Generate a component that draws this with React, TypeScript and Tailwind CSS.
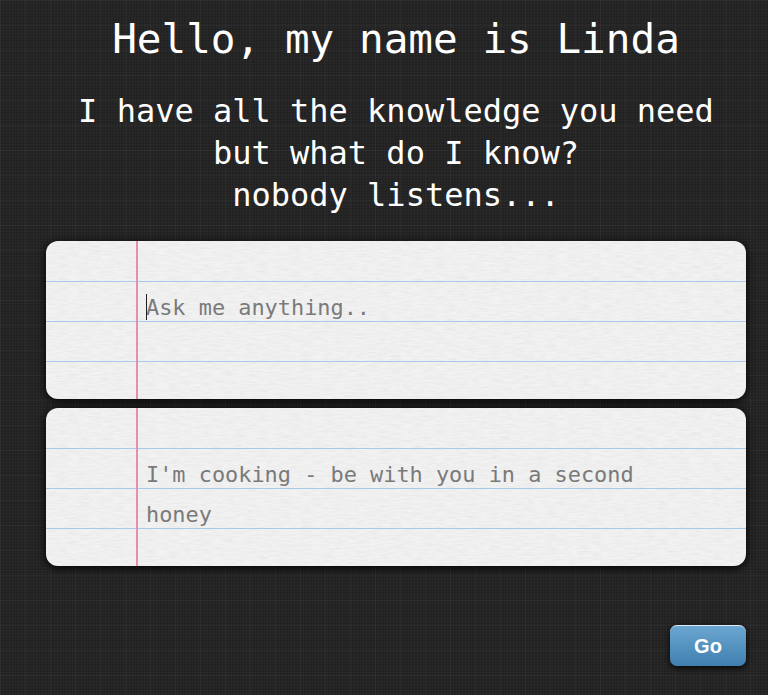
import React from "react";

function PaperCard({ id, children }: { id: string; children: React.ReactNode }) {
  return (
    <div className="relative h-[158px] w-[700px] overflow-hidden rounded-[12px] bg-[#f2f2f2] shadow-[0_2px_10px_rgba(0,0,0,1)]">
      <svg className="absolute inset-0 h-full w-full" aria-hidden="true">
        <filter id={id} x="0" y="0" width="100%" height="100%">
          <feTurbulence type="fractalNoise" baseFrequency="0.09 0.6" numOctaves="3" seed="4" />
          <feColorMatrix type="matrix" values="0 0 0 0 0.6  0 0 0 0 0.6  0 0 0 0 0.6  0.45 0 0 0 -0.15" />
        </filter>
        <rect width="100%" height="100%" filter={`url(#${id})`} />
      </svg>
      <div className="absolute inset-x-0 top-[40px] h-px bg-[#a9c9ec]" />
      <div className="absolute inset-x-0 top-[80px] h-px bg-[#a9c9ec]" />
      <div className="absolute inset-x-0 top-[120px] h-px bg-[#a9c9ec]" />
      <div className="absolute inset-y-0 left-[90px] w-[2px] bg-[#e58fa8]" />
      <div className="relative h-full pl-[100px] pr-[90px] pt-[47px] font-['DejaVu_Sans_Mono',monospace] text-[21.9px] leading-[40px] text-[#7a7a7a]">
        {children}
      </div>
    </div>
  );
}

export default function App() {
  return (
    <div className="min-h-[695px] overflow-hidden bg-[#222222] bg-[linear-gradient(rgba(255,255,255,0.03)_1px,transparent_1px),linear-gradient(90deg,rgba(255,255,255,0.03)_1px,transparent_1px),linear-gradient(rgba(255,255,255,0.02)_1px,transparent_1px),linear-gradient(90deg,rgba(255,255,255,0.02)_1px,transparent_1px)] bg-size-[25px_25px,25px_25px,3px_3px,3px_3px] pl-[46px] font-['DejaVu_Sans_Mono',monospace] text-white">
      <div className="flex w-[700px] flex-col">
        <h1 className="mt-[14px] h-[50px] text-center text-[41px] leading-[50px]">Hello, my name is Linda</h1>
        <h2 className="mt-[26px] text-center text-[32px] leading-[42px]">
          I have all the knowledge you need
          <br />
          but what do I know?
          <br />
          nobody listens...
        </h2>
        <div className="mt-[25px] flex flex-col gap-[9px]">
          <PaperCard id="paper-a">
            <span className="relative">
              <span className="absolute left-0 top-[-1px] h-[26px] w-px bg-[#222]" />
              Ask me anything..
            </span>
          </PaperCard>
          <PaperCard id="paper-b">I'm cooking - be with you in a second honey</PaperCard>
        </div>
        <div className="mt-[59px] flex justify-end">
          <button className="h-[41px] w-[76px] rounded-[7px] border-t border-t-[#dcebf5] bg-[linear-gradient(#6ba6d0,#3f7fb0)] font-['Liberation_Sans',sans-serif] text-[20px] font-bold text-white shadow-[0_2px_6px_rgba(0,0,0,0.9)]">
            Go
          </button>
        </div>
      </div>
    </div>
  );
}
